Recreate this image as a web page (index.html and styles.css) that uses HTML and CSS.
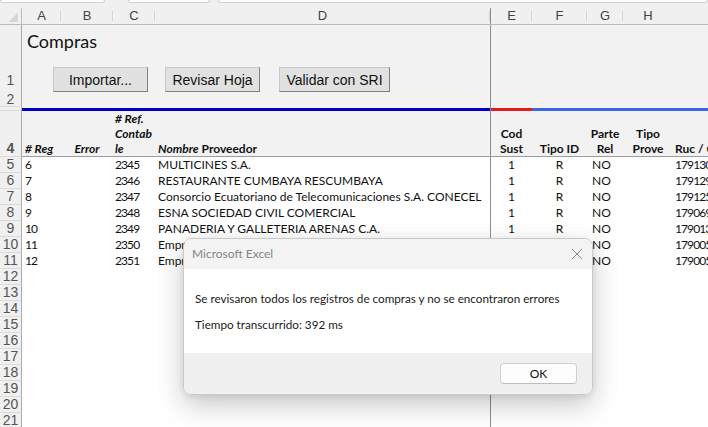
FILE: index.html
```html
<!DOCTYPE html>
<html lang="es">
<head>
    <meta charset="UTF-8">
    <title>Compras</title>
    <link rel="stylesheet" href="styles.css">
</head>
<body>
<div class="sheet">
    <div class="topbar">
        <span class="box-name"></span>
        <span class="box-fx"></span>
        <span class="box-formula"></span>
    </div>

    <div class="row col-head">
        <div class="corner"></div>
        <div>A</div><div>B</div><div>C</div><div>D</div>
        <div class="frozen">E</div><div>F</div><div>G</div><div>H</div><div></div>
    </div>

    <div class="row fill r1">
        <div class="rh">1</div>
        <div class="span-ad">
            <div class="title">Compras</div>
            <div class="buttons">
                <button class="btn btn-import">Importar...</button>
                <button class="btn btn-review">Revisar Hoja</button>
                <button class="btn btn-sri">Validar con SRI</button>
            </div>
        </div>
        <div class="frozen"></div><div></div><div></div><div></div><div></div>
    </div>

    <div class="row fill r2">
        <div class="rh">2</div>
        <div class="span-ad"></div>
        <div class="frozen"></div><div></div><div></div><div></div><div></div>
    </div>

    <div class="row fill r3">
        <div class="rh"></div>
        <div class="span-ad"><div class="line dark-blue"></div></div>
        <div class="frozen"><div class="line red"></div></div>
        <div class="span-rest"><div class="line blue"></div></div>
    </div>

    <div class="row fill r4 head">
        <div class="rh">4</div>
        <div class="c-a"><span><i># Reg</i></span></div>
        <div class="c-b center"><span><i>Error</i></span></div>
        <div class="c-c"><span><i># Ref.<br>Contab<br>le</i></span></div>
        <div class="c-d"><span><i>Nombre</i>&nbsp;Proveedor</span></div>
        <div class="frozen center"><span>Cod<br>Sust</span></div>
        <div class="center"><span>Tipo ID</span></div>
        <div class="center"><span>Parte<br>Rel</span></div>
        <div class="center"><span>Tipo<br>Prove</span></div>
        <div class="c-i"><span>Ruc / Cédula</span></div>
    </div>

    <div class="row data">
        <div class="rh">5</div>
        <div class="c-a">6</div><div></div><div class="c-c">2345</div>
        <div class="c-d">MULTICINES S.A.</div>
        <div class="frozen center">1</div><div class="center">R</div><div class="c-g">NO</div><div></div>
        <div class="c-i">1791300000001</div>
    </div>
    <div class="row data">
        <div class="rh">6</div>
        <div class="c-a">7</div><div></div><div class="c-c">2346</div>
        <div class="c-d">RESTAURANTE CUMBAYA RESCUMBAYA</div>
        <div class="frozen center">1</div><div class="center">R</div><div class="c-g">NO</div><div></div>
        <div class="c-i">1791290000001</div>
    </div>
    <div class="row data">
        <div class="rh">7</div>
        <div class="c-a">8</div><div></div><div class="c-c">2347</div>
        <div class="c-d">Consorcio Ecuatoriano de Telecomunicaciones S.A. CONECEL</div>
        <div class="frozen center">1</div><div class="center">R</div><div class="c-g">NO</div><div></div>
        <div class="c-i">1791250000001</div>
    </div>
    <div class="row data">
        <div class="rh">8</div>
        <div class="c-a">9</div><div></div><div class="c-c">2348</div>
        <div class="c-d">ESNA SOCIEDAD CIVIL COMERCIAL</div>
        <div class="frozen center">1</div><div class="center">R</div><div class="c-g">NO</div><div></div>
        <div class="c-i">1790690000001</div>
    </div>
    <div class="row data">
        <div class="rh">9</div>
        <div class="c-a">10</div><div></div><div class="c-c">2349</div>
        <div class="c-d">PANADERIA Y GALLETERIA ARENAS C.A.</div>
        <div class="frozen center">1</div><div class="center">R</div><div class="c-g">NO</div><div></div>
        <div class="c-i">1790130000001</div>
    </div>
    <div class="row data">
        <div class="rh">10</div>
        <div class="c-a">11</div><div></div><div class="c-c">2350</div>
        <div class="c-d">Empresa Eléctrica Quito S.A.</div>
        <div class="frozen center">1</div><div class="center">R</div><div class="c-g">NO</div><div></div>
        <div class="c-i">1790050000001</div>
    </div>
    <div class="row data">
        <div class="rh">11</div>
        <div class="c-a">12</div><div></div><div class="c-c">2351</div>
        <div class="c-d">Empresa Pública Metropolitana de Agua</div>
        <div class="frozen center">1</div><div class="center">R</div><div class="c-g">NO</div><div></div>
        <div class="c-i">1790050000001</div>
    </div>

    <div class="row data"><div class="rh">12</div><div class="span-ad"></div><div class="frozen"></div></div>
    <div class="row data"><div class="rh">13</div><div class="span-ad"></div><div class="frozen"></div></div>
    <div class="row data"><div class="rh">14</div><div class="span-ad"></div><div class="frozen"></div></div>
    <div class="row data"><div class="rh">15</div><div class="span-ad"></div><div class="frozen"></div></div>
    <div class="row data"><div class="rh">16</div><div class="span-ad"></div><div class="frozen"></div></div>
    <div class="row data"><div class="rh">17</div><div class="span-ad"></div><div class="frozen"></div></div>
    <div class="row data"><div class="rh">18</div><div class="span-ad"></div><div class="frozen"></div></div>
    <div class="row data"><div class="rh">19</div><div class="span-ad"></div><div class="frozen"></div></div>
    <div class="row data"><div class="rh">20</div><div class="span-ad"></div><div class="frozen"></div></div>
    <div class="row data"><div class="rh">21</div><div class="span-ad"></div><div class="frozen"></div></div>

    <!-- cuadro de mensaje -->
    <div class="msgbox">
        <div class="msg-title">
            <span>Microsoft Excel</span>
            <svg class="close" width="12" height="12" viewBox="0 0 12 12">
                <path d="M1 1 L11 11 M11 1 L1 11" stroke="#8a8a8a" stroke-width="1" fill="none"/>
            </svg>
        </div>
        <div class="msg-body">
            <p>Se revisaron todos los registros de compras y no se encontraron errores</p>
            <p>Tiempo transcurrido: 392 ms</p>
        </div>
        <div class="msg-foot">
            <button class="ok">OK</button>
        </div>
    </div>
</div>
</body>
</html>
```

FILE: styles.css
```css
* {
    box-sizing: border-box;
}

body {
    margin: 0;
    background: #f0f0f0;
    font-family: 'Lato', sans-serif;
}

.sheet {
    position: relative;
    width: 708px;
    height: 427px;
    overflow: hidden;
    background: #fff;
}

.topbar {
    display: flex;
    height: 8px;
    background: #f0f0f0;
}

.topbar span {
    height: 3px;
    background: #fff;
    border: 1px solid #d0d0d0;
    border-top: none;
    border-radius: 0 0 3px 3px;
}

.box-name { width: 105px; }
.box-fx { width: 82px; margin-left: 23px; }
.box-formula { flex: 1; margin-left: 8px; }

.row {
    display: grid;
    grid-template-columns: 22px 39px 52px 42px 335px 42px 55px 36px 50px 35px;
}

.row > div {
    white-space: nowrap;
    overflow: hidden;
}

.frozen {
    grid-column: 6;
    border-left: 1px solid #8e8e8e;
}

.center {
    text-align: center;
}

/* encabezado de columnas */
.col-head {
    height: 17px;
    background: #f0f0f0;
    border-bottom: 1px solid #bcbcbc;
    font-family: 'Liberation Sans', Arial, sans-serif;
    font-size: 13px;
    line-height: 16px;
    color: #444;
}

.col-head > div {
    text-align: center;
    background: linear-gradient(#d4d4d4, #d4d4d4) right center / 1px 10px no-repeat;
}

.col-head .corner {
    border-right: 1px solid #bcbcbc;
    background: linear-gradient(135deg, transparent 55%, #d6d6d6 55%) 6px 4px / 12px 10px no-repeat;
}

.col-head > div:nth-child(9),
.col-head > div:last-child {
    background-image: none;
}

/* encabezado de filas */
.rh {
    grid-column: 1;
    background: #f0f0f0;
    border-right: 1px solid #ababab;
    border-bottom: 1px solid #dadada;
    font-family: 'Liberation Sans', Arial, sans-serif;
    font-size: 14px;
    line-height: 16px;
    color: #555;
    text-align: center;
    display: flex;
    align-items: flex-end;
    justify-content: center;
}

.span-ad {
    grid-column: 2 / span 4;
}

.span-rest {
    grid-column: 7 / span 4;
}

.fill {
    background: #f2f2f2;
}

.r1 { height: 65px; }
.r2 { height: 17px; }
.r3 { height: 4px; }

.r1 .rh {
    padding-bottom: 3px;
}

.r2 .rh {
    line-height: 13px;
}

.r1 .span-ad {
    overflow: visible;
}

.title {
    padding: 4px 0 0 5px;
    font-size: 18px;
    line-height: 24px;
    color: #111;
}

.buttons {
    display: flex;
    margin-top: 14px;
}

.btn {
    height: 25px;
    padding: 0;
    background: #e1e1e1;
    border: 1px solid #adadad;
    border-color: #c8c8c8 #7e7e7e #7e7e7e #c8c8c8;
    font-family: 'Liberation Sans', Arial, sans-serif;
    font-size: 14px;
    color: #111;
}

.btn-import { width: 95px; margin-left: 31px; }
.btn-review { width: 95px; margin-left: 17px; }
.btn-sri { width: 111px; margin-left: 19px; }

.line {
    height: 3px;
    margin-top: 1px;
}

.dark-blue { background: #0000c4; }
.red { background: #e01c1c; }
.blue { background: #3a64e4; }

/* fila de títulos */
.head {
    height: 46px;
    font-size: 12px;
    font-weight: bold;
    line-height: 15px;
    color: #111;
}

.head > div:not(.rh) {
    border-bottom: 1px solid #9c9c9c;
    display: flex;
    align-items: flex-end;
}

.head > div.center {
    justify-content: center;
}

.c-a { padding-left: 3px; }
.c-c { padding-left: 2px; }
.c-d { padding-left: 3px; }
.c-g { padding-left: 5px; }
.c-i { padding-left: 2px; }

/* datos */
.data {
    height: 16px;
    font-size: 12px;
    line-height: 16px;
    color: #111;
}

.data .c-a,
.data .c-c,
.data .c-i {
    letter-spacing: -0.9px;
}

/* cuadro de mensaje */
.msgbox {
    position: absolute;
    left: 183px;
    top: 238px;
    width: 410px;
    height: 157px;
    border: 1px solid #c9c9c9;
    border-radius: 8px;
    overflow: hidden;
    box-shadow: 0 10px 28px rgba(0, 0, 0, 0.22), 0 2px 6px rgba(0, 0, 0, 0.08);
    font-family: 'Lato', sans-serif;
    font-size: 11.7px;
    color: #1a1a1a;
}

.msg-title {
    height: 30px;
    background: #f3f3f3;
    display: flex;
    align-items: center;
    justify-content: space-between;
    padding: 0 9px 2px 8px;
    font-size: 12px;
    color: #858585;
}

.close {
    margin-top: 2px;
}

.msg-body {
    height: 84px;
    background: #fff;
    padding: 21px 0 0 11px;
}

.msg-body p {
    margin: 0 0 10px;
    line-height: 16px;
}

.msg-foot {
    height: 41px;
    background: #f0f0f0;
    display: flex;
    justify-content: flex-end;
    padding: 10px 15px 0 0;
}

.ok {
    width: 77px;
    height: 21px;
    padding: 0;
    background: #fdfdfd;
    border: 1px solid #d0d0d0;
    border-bottom-color: #bdbdbd;
    border-radius: 4px;
    font-family: 'Lato', sans-serif;
    font-size: 12px;
    color: #111;
}
```
